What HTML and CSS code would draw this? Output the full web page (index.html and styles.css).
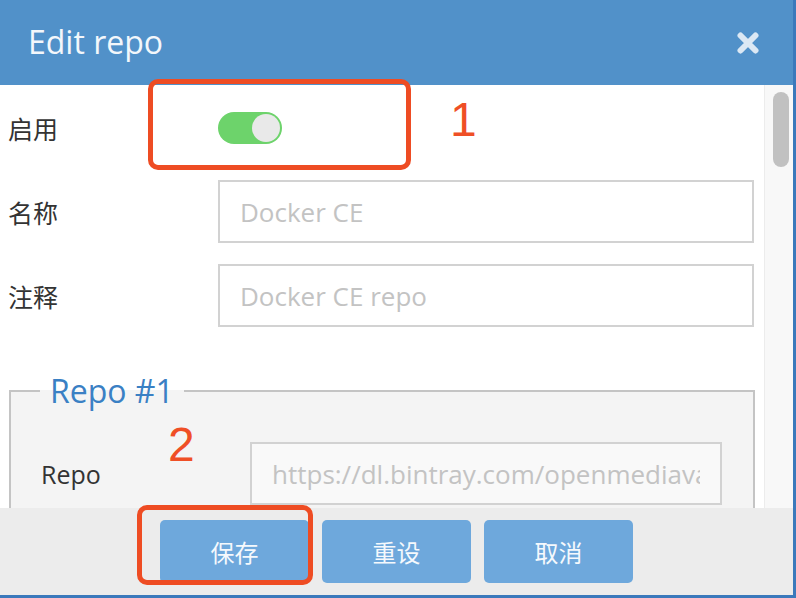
FILE: index.html
```html
<!DOCTYPE html>
<html lang="zh">
<head>
<meta charset="utf-8">
<title>Edit repo</title>
<link rel="stylesheet" href="styles.css">
</head>
<body>
<div class="dialog">
  <div class="header">
    <span class="title">Edit repo</span>
    <svg class="close" width="22" height="22" viewBox="0 0 22 22">
      <path d="M3.5 3.5 L18.5 18.5 M18.5 3.5 L3.5 18.5" stroke="#dbe8f4" stroke-width="6" stroke-linecap="round" fill="none"/>
    </svg>
  </div>
  <div class="body">
    <div class="content">
      <div class="form">
        <label class="label">启用</label>
        <div class="field"><span class="toggle"><span class="knob"></span></span></div>
        <label class="label">名称</label>
        <input class="input" type="text" placeholder="Docker CE">
        <label class="label">注释</label>
        <input class="input" type="text" placeholder="Docker CE repo">
      </div>
      <fieldset class="group">
        <legend class="legend">Repo #1</legend>
        <div class="form form-inner">
          <label class="label">Repo</label>
          <input class="input input-alt" type="text" placeholder="https://dl.bintray.com/openmediavault-plugin-developers/docker">
        </div>
      </fieldset>
    </div>
    <div class="scrollbar"><div class="thumb"></div></div>
  </div>
  <div class="footer">
    <button class="btn">保存</button>
    <button class="btn">重设</button>
    <button class="btn">取消</button>
  </div>
  <div class="mark mark-box1"></div>
  <div class="mark mark-box2"></div>
  <div class="mark mark-num1">1</div>
  <div class="mark mark-num2">2</div>
</div>
</body>
</html>
```
FILE: styles.css
```css
html, body {
  margin: 0;
  padding: 0;
}
body {
  font-family: "Open Sans", "Noto Sans CJK SC", sans-serif;
  color: #333;
  background: #fff;
}
.dialog {
  position: relative;
  width: 796px;
  height: 598px;
  box-sizing: border-box;
  border-right: 3px solid #3b79bb;
  border-bottom: 3px solid #3b79bb;
  display: flex;
  flex-direction: column;
  overflow: hidden;
}
.header {
  height: 85px;
  flex: none;
  background: #5191c9;
  display: flex;
  align-items: center;
  justify-content: space-between;
  padding: 0 34px 0 28px;
  box-sizing: border-box;
}
.title {
  color: #f3f7fb;
  font-size: 32px;
  line-height: 40px;
  margin-top: -2px;
}
.close {
  display: block;
  margin-top: 1px;
}
.body {
  flex: 1;
  display: flex;
  min-height: 0;
}
.content {
  flex: 1;
  background: #fff;
  padding: 11px 10px 0 8px;
  overflow: hidden;
}
.scrollbar {
  width: 29px;
  flex: none;
  background: #f8f8f8;
  border-left: 1px solid #ececec;
  padding: 7px 0 0 8px;
  box-sizing: border-box;
}
.thumb {
  width: 16px;
  height: 75px;
  border-radius: 8px;
  background: #c1c1c1;
}
.form {
  display: grid;
  grid-template-columns: 210px 1fr;
  grid-auto-rows: 63px;
  row-gap: 21px;
  align-items: center;
}
.label {
  font-size: 25px;
  color: #333;
}
.field {
  display: flex;
  align-items: center;
}
.toggle {
  width: 64px;
  height: 32px;
  border-radius: 16px;
  background: #6dd36b;
  display: flex;
  align-items: center;
  justify-content: flex-end;
  padding: 0 2px;
  box-sizing: border-box;
}
.knob {
  width: 28px;
  height: 28px;
  border-radius: 50%;
  background: #e9e9e9;
}
.input {
  height: 63px;
  box-sizing: border-box;
  border: 2px solid #d2d2d2;
  background: #fff;
  padding: 0 20px 0 20px;
  font-family: "Open Sans", "Noto Sans CJK SC", sans-serif;
  font-size: 26px;
  color: #333;
  outline: none;
  width: 100%;
  margin: 0;
}
.input::placeholder {
  color: #c3c3c3;
}
.input-alt {
  background: #f9f9f9;
}
.group {
  margin: 44px -1px 0 1px;
  padding: 31px 31px 30px 30px;
  border: 2px solid #c4c4c4;
  background: #f4f4f4;
  min-width: 0;
}
.legend {
  color: #3a80c4;
  font-size: 32px;
  line-height: 40px;
  padding: 0 10px;
  margin-left: -1px;
}
.form-inner {
  grid-template-columns: 209px 1fr;
}
.footer {
  height: 87px;
  flex: none;
  background: #ececec;
  display: flex;
  align-items: center;
  gap: 13px;
  padding-left: 160px;
  box-sizing: border-box;
}
.btn {
  width: 149px;
  height: 63px;
  border: none;
  border-radius: 5px;
  background: #6ea8dc;
  color: #f5f9fd;
  font-family: "Open Sans", "Noto Sans CJK SC", sans-serif;
  font-size: 24px;
  padding: 0;
}
.mark {
  position: absolute;
  color: #ef4f26;
  font-family: "Liberation Sans", "Open Sans", sans-serif;
}
.mark-box1 {
  left: 148px;
  top: 79px;
  width: 263px;
  height: 91px;
  box-sizing: border-box;
  border: 5px solid #ee4c23;
  border-radius: 10px;
}
.mark-box2 {
  left: 137px;
  top: 505px;
  width: 176px;
  height: 80px;
  box-sizing: border-box;
  border: 5px solid #ee4c23;
  border-radius: 10px;
}
.mark-num1 {
  left: 450px;
  top: 92px;
  font-size: 48px;
  line-height: 56px;
}
.mark-num2 {
  left: 168px;
  top: 417px;
  font-size: 48px;
  line-height: 56px;
}
```
